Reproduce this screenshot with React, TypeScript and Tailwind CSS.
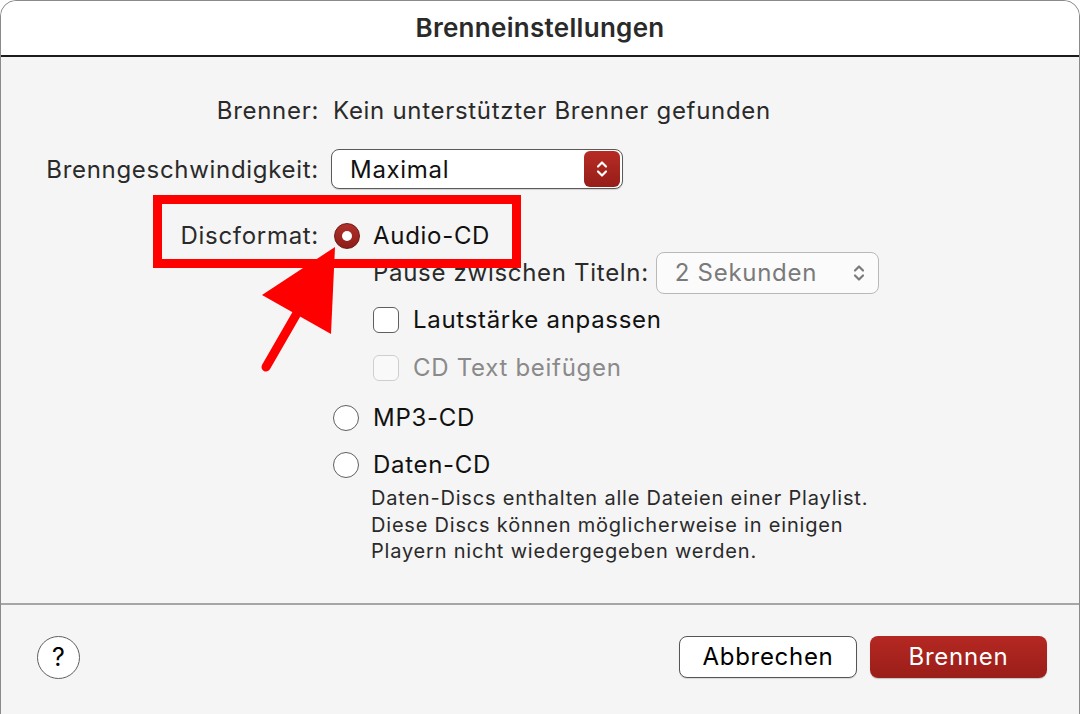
import React from "react";

const font = { fontFamily: "Inter, 'Noto Sans', sans-serif" };

function Chevrons({ color }: { color: string }) {
  return (
    <svg width="14" height="22" viewBox="0 0 14 22" fill="none">
      <path d="M3 8.5 L7 4.5 L11 8.5" stroke={color} strokeWidth="2.2" strokeLinecap="round" strokeLinejoin="round" />
      <path d="M3 13.5 L7 17.5 L11 13.5" stroke={color} strokeWidth="2.2" strokeLinecap="round" strokeLinejoin="round" />
    </svg>
  );
}

function Radio({ checked }: { checked?: boolean }) {
  if (checked) {
    return (
      <span className="flex h-[26px] w-[26px] items-center justify-center rounded-full border border-[#6e1612] bg-gradient-to-b from-[#b3302a] to-[#8c1d18]">
        <span className="h-[10px] w-[10px] rounded-full bg-white" />
      </span>
    );
  }
  return <span className="h-[26px] w-[26px] rounded-full border-[1.5px] border-[#5f5f5f] bg-white" />;
}

function Checkbox({ disabled }: { disabled?: boolean }) {
  return (
    <span
      className={
        disabled
          ? "h-[26px] w-[26px] rounded-[6px] border-[1.5px] border-[#cfcfcf] bg-[#f9f9f9]"
          : "h-[26px] w-[26px] rounded-[6px] border-[1.5px] border-[#5f5f5f] bg-white"
      }
    />
  );
}

export default function App() {
  return (
    <div className="relative h-[714px] w-[1080px] overflow-hidden bg-white" style={font}>
      <div className="flex h-[730px] flex-col rounded-[16px] border border-[#8a8a8a] bg-[#f5f5f5]">
        {/* title bar */}
        <div className="flex h-[56px] items-center justify-center rounded-t-[16px] border-b-[2px] border-[#1c1c1c] bg-white">
          <span className="-mt-[1px] text-[26px] font-semibold tracking-[0.3px] text-[#2a2a2a]">Brenneinstellungen</span>
        </div>

        {/* body */}
        <div className="flex h-[546px] flex-col pt-[34px] text-[24px] tracking-[0.7px] text-[#111]">
          <div className="flex h-[40px] items-center">
            <span className="w-[318px] text-right text-[#2a2a2a]">Brenner:</span>
            <span className="ml-[14px] text-[#2a2a2a]">Kein unterstützter Brenner gefunden</span>
          </div>

          <div className="mt-[18px] flex h-[40px] items-center">
            <span className="w-[318px] pt-[2px] text-right text-[#2a2a2a]">Brenngeschwindigkeit:</span>
            <div className="ml-[12px] flex h-[40px] w-[292px] items-center justify-between rounded-[8px] border border-[#5a5a5a] bg-white pl-[18px] pr-[2px] shadow-[0_1px_1px_rgba(0,0,0,0.15)]">
              <span className="pt-[2px]">Maximal</span>
              <span className="flex h-[36px] w-[36px] items-center justify-center rounded-[6px] bg-gradient-to-b from-[#b72c25] to-[#961d18]">
                <Chevrons color="#ffffff" />
              </span>
            </div>
          </div>

          <div className="mt-[30px] flex h-[33px] items-center">
            <span className="w-[318px] text-right text-[#2a2a2a]">Discformat:</span>
            <span className="ml-[15px]">
              <Radio checked />
            </span>
            <span className="ml-[13px]">Audio-CD</span>
          </div>

          <div className="flex h-[42px] items-center pl-[372px]">
            <span className="text-[#2a2a2a]">Pause zwischen Titeln:</span>
            <div className="ml-[7px] flex h-[42px] w-[223px] items-center justify-between rounded-[8px] border-[1.5px] border-[#b9b9b9] bg-[#fbfbfb] pl-[18px] pr-[12px]">
              <span className="text-[#7a7a7a]">2 Sekunden</span>
              <Chevrons color="#7a7a7a" />
            </div>
          </div>

          <div className="mt-[5px] flex h-[42px] items-center pl-[372px]">
            <Checkbox />
            <span className="ml-[14px]">Lautstärke anpassen</span>
          </div>

          <div className="mt-[6px] flex h-[42px] items-center pl-[372px]">
            <Checkbox disabled />
            <span className="ml-[14px] text-[#8a8a8a]">CD Text beifügen</span>
          </div>

          <div className="mt-[8px] flex h-[42px] items-center pl-[332px]">
            <Radio />
            <span className="ml-[14px]">MP3-CD</span>
          </div>

          <div className="mt-[6px] flex h-[40px] items-center pl-[332px]">
            <Radio />
            <span className="ml-[14px]">Daten-CD</span>
          </div>

          <p className="mt-[0px] pl-[370px] text-[20px] leading-[26.5px] tracking-[0.8px] text-[#2a2a2a]">
            Daten-Discs enthalten alle Dateien einer Playlist.
            <br />
            Diese Discs können möglicherweise in einigen
            <br />
            Playern nicht wiedergegeben werden.
          </p>
        </div>

        <div className="h-[2px] bg-[#a6a6a6]" />

        {/* footer */}
        <div className="flex items-start justify-between pl-[36px] pr-[32px] pt-[31px]">
          <button className="flex h-[43px] w-[43px] items-center justify-center rounded-full border-[1.5px] border-[#5f5f5f] bg-white text-[25px] text-black">
            ?
          </button>
          <div className="flex gap-[13px]">
            <button className="h-[42px] w-[178px] rounded-[8px] border-[1.5px] border-[#555] bg-white text-[24px] tracking-[0.7px] text-black shadow-[0_1px_1px_rgba(0,0,0,0.12)]">
              Abbrechen
            </button>
            <button className="h-[42px] w-[177px] rounded-[8px] bg-gradient-to-b from-[#b52822] to-[#9a1e19] text-[24px] tracking-[0.7px] text-white shadow-[0_1px_1px_rgba(0,0,0,0.2)]">
              Brennen
            </button>
          </div>
        </div>
      </div>

      {/* annotation: red frame */}
      <div className="pointer-events-none absolute left-[153px] top-[195px] h-[73px] w-[368px] border-[9px] border-[#ff0000]" />

      {/* annotation: arrow */}
      <svg className="pointer-events-none absolute left-0 top-0" width="1080" height="714" viewBox="0 0 1080 714">
        <line x1="266" y1="367" x2="300" y2="308" stroke="#ff0000" strokeWidth="9" strokeLinecap="round" />
        <polygon points="335,247 262,295 331,334" fill="#ff0000" />
      </svg>
    </div>
  );
}
